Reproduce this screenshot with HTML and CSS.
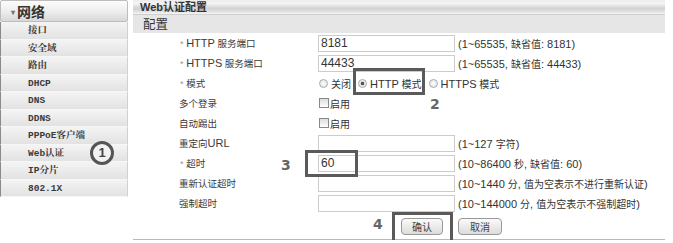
FILE: index.html
```html
<!DOCTYPE html>
<html lang="zh-CN">
<head>
    <meta charset="UTF-8">
    <title>Web认证配置</title>
    <link rel="stylesheet" href="styles.css">
</head>
<body>
    <div class="page">
        <!-- left menu -->
        <div class="sidebar">
            <div class="side-head"><span class="arrow">▾</span>网络</div>
            <div class="side-item">接口</div>
            <div class="side-item">安全域</div>
            <div class="side-item">路由</div>
            <div class="side-item">DHCP</div>
            <div class="side-item">DNS</div>
            <div class="side-item">DDNS</div>
            <div class="side-item">PPPoE客户端</div>
            <div class="side-item">Web认证</div>
            <div class="side-item">IP分片</div>
            <div class="side-item">802.1X</div>
            <div class="mark-circle">1</div>
        </div>

        <!-- main panel -->
        <div class="main">
            <div class="title-bar">Web认证配置</div>
            <div class="section-bar">配置</div>

            <div class="form">
                <div class="row">
                    <div class="label"><span class="star">*</span> <span class="en">HTTP</span> 服务端口</div>
                    <input class="field" type="text" value="8181">
                    <div class="hint">(1~65535, <span class="zh">缺省值</span>: 8181)</div>
                </div>
                <div class="row">
                    <div class="label"><span class="star">*</span> <span class="en">HTTPS</span> 服务端口</div>
                    <input class="field" type="text" value="44433">
                    <div class="hint">(1~65535, <span class="zh">缺省值</span>: 44433)</div>
                </div>
                <div class="row">
                    <div class="label"><span class="star">*</span> 模式</div>
                    <div class="options">
                        <span class="radio"></span><span class="opt-text">关闭</span>
                        <span class="radio checked"></span><span class="opt-text"><span class="en">HTTP</span> 模式</span>
                        <span class="radio"></span><span class="opt-text"><span class="en">HTTPS</span> 模式</span>
                    </div>
                </div>
                <div class="row">
                    <div class="label plain">多个登录</div>
                    <div class="options"><span class="check"></span><span>启用</span></div>
                </div>
                <div class="row">
                    <div class="label plain">自动踢出</div>
                    <div class="options"><span class="check"></span><span>启用</span></div>
                </div>
                <div class="row">
                    <div class="label plain">重定向<span class="en">URL</span></div>
                    <input class="field" type="text" value="">
                    <div class="hint">(1~127 <span class="zh">字符</span>)</div>
                </div>
                <div class="row">
                    <div class="label"><span class="star">*</span> 超时</div>
                    <input class="field" type="text" value="60">
                    <div class="hint">(10~86400 <span class="zh">秒</span>, <span class="zh">缺省值</span>: 60)</div>
                </div>
                <div class="row">
                    <div class="label plain">重新认证超时</div>
                    <input class="field" type="text" value="">
                    <div class="hint">(10~1440 <span class="zh">分</span>, <span class="zh">值为空表示不进行重新认证</span>)</div>
                </div>
                <div class="row">
                    <div class="label plain">强制超时</div>
                    <input class="field" type="text" value="">
                    <div class="hint">(10~144000 <span class="zh">分</span>, <span class="zh">值为空表示不强制超时</span>)</div>
                </div>
                <div class="buttons">
                    <button class="btn">确认</button>
                    <button class="btn">取消</button>
                </div>
            </div>

            <!-- annotation marks -->
            <div class="mark-box box2"></div>
            <div class="mark-num num2">2</div>
            <div class="mark-box box3"></div>
            <div class="mark-num num3">3</div>
            <div class="mark-box box4"></div>
            <div class="mark-num num4">4</div>
        </div>
    </div>
</body>
</html>
```

FILE: styles.css
```css
body {
    margin: 0;
    padding: 0;
    background-color: #fff;
    color: #333;
    font-family: "Liberation Sans", "Noto Sans CJK SC", sans-serif;
    overflow: hidden;
}
.page {
    display: flex;
    gap: 5px;
    width: 665px;
}

/* left menu */
.sidebar {
    position: relative;
    width: 128px;
    flex: none;
}
.side-head {
    height: 20px;
    line-height: 20px;
    border: 1px solid #bcbcbc;
    border-radius: 2px;
    background: linear-gradient(#fdfdfd, #ececec 55%, #d8d8d8);
    font-family: "Noto Sans CJK SC", sans-serif;
    font-size: 14px;
    font-weight: bold;
    color: #333;
    padding-left: 10px;
}
.arrow {
    font-size: 8px;
    color: #777;
    margin-right: 2px;
    vertical-align: 2px;
}
.side-item {
    height: 17.5px;
    line-height: 17px;
    box-sizing: border-box;
    border-left: 1px solid #8a8a8a;
    border-right: 1px solid #d0d0d0;
    border-bottom: 1px solid #f6f6f6;
    background: linear-gradient(#f4f4f4, #e2e2e2);
    padding-left: 27px;
    font-family: "Liberation Mono", "Noto Serif CJK SC", "Noto Sans CJK SC", monospace;
    font-size: 9.5px;
    font-weight: bold;
    color: #3a3a3a;
}
.side-item:last-of-type {
    border-bottom: 1px solid #9a9a9a;
}
.mark-circle {
    position: absolute;
    left: 90px;
    top: 141px;
    width: 24px;
    height: 24px;
    box-sizing: border-box;
    border: 3px solid #555;
    border-radius: 50%;
    background: #f2f2f2;
    text-align: center;
    line-height: 18px;
    font-size: 13px;
    font-weight: bold;
    color: #444;
}

/* main panel */
.main {
    position: relative;
    width: 532px;
    flex: none;
}
.title-bar {
    height: 15px;
    line-height: 14px;
    box-sizing: border-box;
    border-bottom: 1px solid #cfcfcf;
    background: linear-gradient(#ececec, #f4f4f4 25%, #d2d2d2 60%, #dedede 80%, #f6f6f6);
    padding-left: 7px;
    font-size: 11px;
    font-weight: bold;
    color: #333;
}
.section-bar {
    height: 18px;
    line-height: 18px;
    background-color: #e6e6e6;
    padding-left: 10px;
    font-family: "Noto Sans CJK SC", sans-serif;
    font-size: 12.5px;
    color: #333;
}
.form {
    border-bottom: 1px solid #b8b8b8;
}
.row {
    display: grid;
    grid-template-columns: 182px 137px 1fr;
    column-gap: 3px;
    align-items: center;
    height: 20px;
}
.en {
    font-size: 11px;
}
.zh {
    font-size: 10px;
}
.label {
    padding-left: 47px;
    font-size: 9.5px;
    color: #3a3a3a;
    white-space: nowrap;
}
.label.plain {
    padding-left: 46px;
}
.star {
    color: #999;
    font-size: 9px;
}
.field {
    height: 17px;
    width: 137px;
    box-sizing: border-box;
    margin: 0;
    border: 1px solid #cccccc;
    padding: 0 2px;
    font-family: "Liberation Sans", sans-serif;
    font-size: 12px;
    color: #333;
    background: #fff;
}
.hint {
    font-size: 11px;
    color: #333;
    white-space: nowrap;
}
.options {
    grid-column: 2 / 4;
    display: flex;
    align-items: center;
    font-size: 10px;
    color: #333;
    white-space: nowrap;
    padding-left: 1px;
}
.radio {
    width: 9px;
    height: 9px;
    box-sizing: border-box;
    border: 1px solid #aaa;
    border-radius: 50%;
    background: radial-gradient(#fff, #ddd);
    margin-right: 3px;
}
.radio.checked {
    background: radial-gradient(#555 0, #555 30%, #ddd 40%, #fff);
}
.opt-text {
    margin-right: 7px;
}
.check {
    width: 10px;
    height: 10px;
    box-sizing: border-box;
    border: 1px solid #888;
    background: linear-gradient(#ddd, #fff);
    margin-right: 1px;
}
.buttons {
    display: flex;
    align-items: center;
    gap: 15px;
    height: 26px;
    padding-left: 268px;
}
.btn {
    height: 17px;
    width: 42px;
    padding: 0;
    border: 1px solid #999;
    border-radius: 4px;
    background: linear-gradient(#fafafa, #dcdcdc);
    font-family: "Noto Sans CJK SC", sans-serif;
    font-size: 10px;
    color: #444;
}
.btn + .btn {
    width: 44px;
}

/* numbered marks drawn over the form */
.mark-box {
    position: absolute;
    box-sizing: border-box;
    border: 3px solid #5a5a5a;
}
.box2 { left: 220px; top: 68px; width: 72px; height: 27px; }
.box3 { left: 172px; top: 150px; width: 53px; height: 27px; }
.box4 { left: 259px; top: 212px; width: 61px; height: 40px; }
.mark-num {
    position: absolute;
    font-family: "DejaVu Sans", sans-serif;
    font-size: 14px;
    font-weight: bold;
    color: #666;
    line-height: 16px;
}
.num2 { left: 297px; top: 96px; }
.num3 { left: 148px; top: 157px; }
.num4 { left: 240px; top: 216px; }
```
